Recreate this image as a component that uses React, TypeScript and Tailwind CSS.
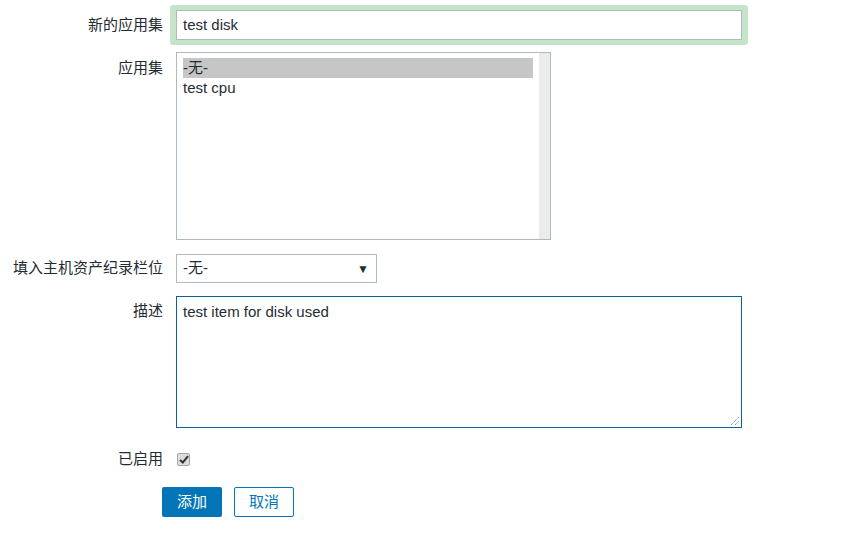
const font = { fontFamily: '"Liberation Sans", "Noto Sans CJK SC", Arial, sans-serif' };

function Label({ text, pt }: { text: string; pt: string }) {
  return <div className={`w-[163px] shrink-0 text-right leading-[20px] ${pt}`}>{text}</div>;
}

export default function App() {
  return (
    <div className="min-h-screen w-[841px] bg-white text-[15px] text-[#1f2c33]" style={font}>
      <div className="flex flex-col pt-[5px]">
        {/* new application */}
        <div className="flex gap-[7px]">
          <Label text="新的应用集" pt="pt-[10px]" />
          <div className="rounded-[3px] bg-[#c6e5c8] px-[6px] py-[5px]">
            <div className="flex h-[30px] w-[566px] items-center border border-[#acbbc2] bg-white px-[6px]">
              test disk
            </div>
          </div>
        </div>

        {/* applications listbox */}
        <div className="mt-[7px] flex gap-[13px]">
          <Label text="应用集" pt="pt-[6px]" />
          <div className="flex h-[188px] w-[375px] border border-[#acbbc2] bg-white">
            <div className="flex-1 py-[5px] pl-[6px] pr-[6px] leading-[20px]">
              <div className="bg-[#c6c6c6]">-无-</div>
              <div>test cpu</div>
            </div>
            <div className="w-[11px] bg-[#ebebeb]" />
          </div>
        </div>

        {/* inventory field */}
        <div className="mt-[14px] flex gap-[13px]">
          <Label text="填入主机资产纪录栏位" pt="pt-[4px]" />
          <div className="flex h-[29px] w-[201px] items-center justify-between border border-[#acbbc2] bg-white pl-[6px] pr-[7px]">
            <span>-无-</span>
            <span className="text-[12px] text-[#1f2c33]">▼</span>
          </div>
        </div>

        {/* description */}
        <div className="mt-[13px] flex gap-[13px]">
          <Label text="描述" pt="pt-[5px]" />
          <div className="relative h-[132px] w-[566px] border border-[#0d619a] bg-white px-[6px] pt-[5px] leading-[20px]">
            test item for disk used
            <svg className="absolute bottom-[1px] right-[1px]" width="10" height="10" viewBox="0 0 10 10">
              <path d="M1 9 L9 1 M5 9 L9 5" stroke="#777" strokeWidth="1" strokeDasharray="1 1" />
            </svg>
          </div>
        </div>

        {/* enabled */}
        <div className="mt-[21px] flex items-center gap-[14px]">
          <div className="w-[163px] shrink-0 text-right leading-[20px]">已启用</div>
          <div className="flex h-[13px] w-[13px] items-center justify-center rounded-[2px] border border-[#a5a5a5] bg-[#dcdcdc]">
            <svg width="10" height="9" viewBox="0 0 10 9">
              <path d="M1 5 L3.8 7.5 L9 1.2" fill="none" stroke="#333" strokeWidth="2" />
            </svg>
          </div>
        </div>

        {/* buttons */}
        <div className="mt-[18px] flex gap-[12px] pl-[162px]">
          <button className="h-[30px] w-[60px] rounded-[2px] bg-[#0275b8] text-white">添加</button>
          <button className="h-[30px] w-[60px] rounded-[2px] border border-[#0275b8] bg-white text-[#0275b8]">取消</button>
        </div>
      </div>
    </div>
  );
}
